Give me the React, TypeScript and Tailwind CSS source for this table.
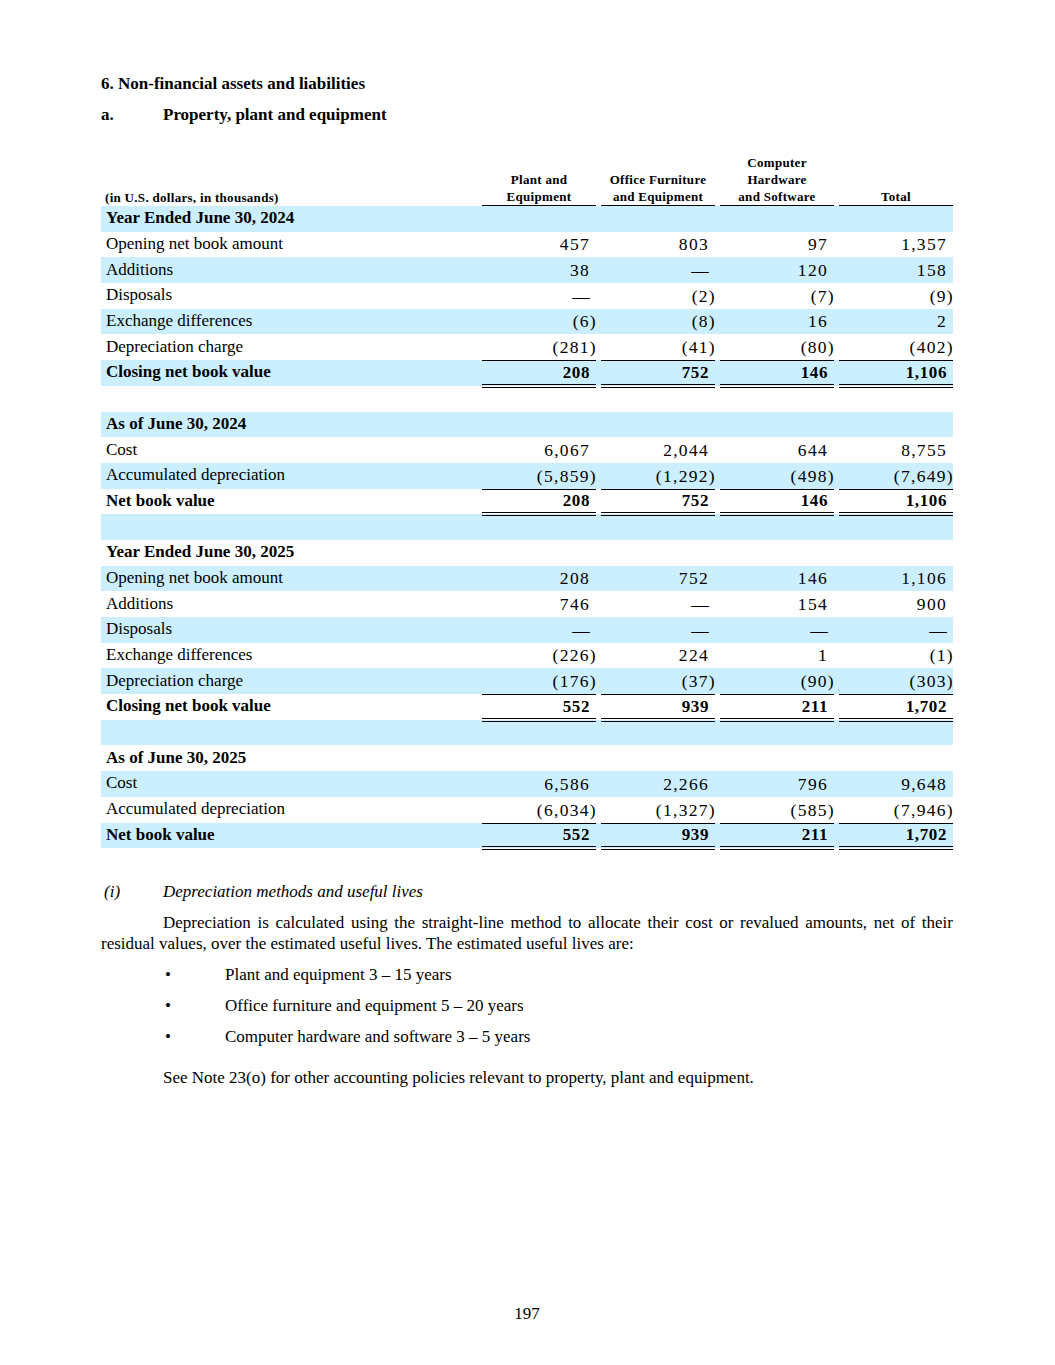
import React from "react";

type Kind = "section" | "normal" | "total" | "blank";
type Row = { kind: Kind; label?: string; vals?: string[] };

const rows: Row[] = [
  { kind: "section", label: "Year Ended June 30, 2024" },
  { kind: "normal", label: "Opening net book amount", vals: ["457", "803", "97", "1,357"] },
  { kind: "normal", label: "Additions", vals: ["38", "—", "120", "158"] },
  { kind: "normal", label: "Disposals", vals: ["—", "(2)", "(7)", "(9)"] },
  { kind: "normal", label: "Exchange differences", vals: ["(6)", "(8)", "16", "2"] },
  { kind: "normal", label: "Depreciation charge", vals: ["(281)", "(41)", "(80)", "(402)"] },
  { kind: "total", label: "Closing net book value", vals: ["208", "752", "146", "1,106"] },
  { kind: "blank" },
  { kind: "section", label: "As of June 30, 2024" },
  { kind: "normal", label: "Cost", vals: ["6,067", "2,044", "644", "8,755"] },
  { kind: "normal", label: "Accumulated depreciation", vals: ["(5,859)", "(1,292)", "(498)", "(7,649)"] },
  { kind: "total", label: "Net book value", vals: ["208", "752", "146", "1,106"] },
  { kind: "blank" },
  { kind: "section", label: "Year Ended June 30, 2025" },
  { kind: "normal", label: "Opening net book amount", vals: ["208", "752", "146", "1,106"] },
  { kind: "normal", label: "Additions", vals: ["746", "—", "154", "900"] },
  { kind: "normal", label: "Disposals", vals: ["—", "—", "—", "—"] },
  { kind: "normal", label: "Exchange differences", vals: ["(226)", "224", "1", "(1)"] },
  { kind: "normal", label: "Depreciation charge", vals: ["(176)", "(37)", "(90)", "(303)"] },
  { kind: "total", label: "Closing net book value", vals: ["552", "939", "211", "1,702"] },
  { kind: "blank" },
  { kind: "section", label: "As of June 30, 2025" },
  { kind: "normal", label: "Cost", vals: ["6,586", "2,266", "796", "9,648"] },
  { kind: "normal", label: "Accumulated depreciation", vals: ["(6,034)", "(1,327)", "(585)", "(7,946)"] },
  { kind: "total", label: "Net book value", vals: ["552", "939", "211", "1,702"] },
];

function ValueCell({ v, total }: { v?: string; total: boolean }) {
  const paren = !!v && v.startsWith("(");
  const dash = v === "—";
  const pad = paren ? "pr-0 mr-[-1px]" : dash ? "pr-[5px]" : "pr-[6px]";
  return (
    <div className="w-[119px] h-full pl-[5px]">
      {total ? (
        <div className="h-[27.5px] flex items-center justify-end border-t border-t-black border-b-4 border-b-black border-double [border-top-style:solid]">
          <span className="font-bold tracking-[0.6px] pr-[6px] text-[17px]">{v}</span>
        </div>
      ) : (
        <div className="h-full flex items-center justify-end">
          <span className={"tracking-[1.3px] text-[17.5px] " + pad}>{v}</span>
        </div>
      )}
    </div>
  );
}

export default function App() {
  return (
    <div
      className="w-[1055px] min-h-[1365px] bg-white text-black pl-[101px] pr-[102px] pt-[74px]"
      style={{ fontFamily: '"Liberation Serif", "Times New Roman", serif' }}
    >
      <div className="text-[17px] leading-[20px] font-bold">6. Non-financial assets and liabilities</div>
      <div className="text-[17px] leading-[20px] font-bold mt-[11px] flex">
        <span className="w-[62px]">a.</span>
        <span>Property, plant and equipment</span>
      </div>

      {/* header */}
      <div className="flex mt-[29px] text-[13px] leading-[17px] font-bold">
        <div className="w-[376px] flex items-end pl-[4px] tracking-[0.3px]">(in U.S. dollars, in thousands)</div>
        {[
          ["Plant and", "Equipment"],
          ["Office Furniture", "and Equipment"],
          ["Computer", "Hardware", "and Software"],
          ["Total"],
        ].map((lines, i) => (
          <div key={i} className="w-[119px] pl-[5px] flex">
            <div className="flex-1 flex flex-col justify-end items-center border-b-[1.5px] border-black tracking-[0.3px]">
              {lines.map((l) => (
                <div key={l}>{l}</div>
              ))}
            </div>
          </div>
        ))}
      </div>

      {/* rows */}
      <div className="text-[17px]">
        {rows.map((r, i) => (
          <div
            key={i}
            className={"flex h-[25.7px] items-stretch " + (i % 2 === 0 ? "bg-[#ccefff]" : "bg-white")}
          >
            <div
              className={
                "w-[376px] pl-[5px] flex items-center leading-none " +
                (r.kind === "section" || r.kind === "total" ? "font-bold" : "")
              }
            >
              <span className="-mt-[2px]">{r.label}</span>
            </div>
            {r.vals
              ? r.vals.map((v, j) => <ValueCell key={j} v={v} total={r.kind === "total"} />)
              : null}
          </div>
        ))}
      </div>

      {/* notes */}
      <div className="text-[17px] leading-[20px] italic flex mt-[34px]">
        <span className="w-[62px] pl-[3px]">(i)</span>
        <span>Depreciation methods and useful lives</span>
      </div>
      <p className="text-[17px] leading-[21px] text-justify indent-[62px] mt-[10px]">
        Depreciation is calculated using the straight-line method to allocate their cost or revalued amounts, net of
        their residual values, over the estimated useful lives. The estimated useful lives are:
      </p>
      <div className="text-[17px] leading-[21px]">
        {[
          "Plant and equipment 3 – 15 years",
          "Office furniture and equipment 5 – 20 years",
          "Computer hardware and software 3 – 5 years",
        ].map((t) => (
          <div key={t} className="flex mt-[10px]">
            <span className="w-[124px] pl-[64px]">•</span>
            <span>{t}</span>
          </div>
        ))}
      </div>
      <div className="text-[17px] leading-[21px] pl-[62px] mt-[20px]">
        See Note 23(o) for other accounting policies relevant to property, plant and equipment.
      </div>

      <div className="text-[17px] leading-[20px] text-center mt-[216px]">197</div>
    </div>
  );
}
